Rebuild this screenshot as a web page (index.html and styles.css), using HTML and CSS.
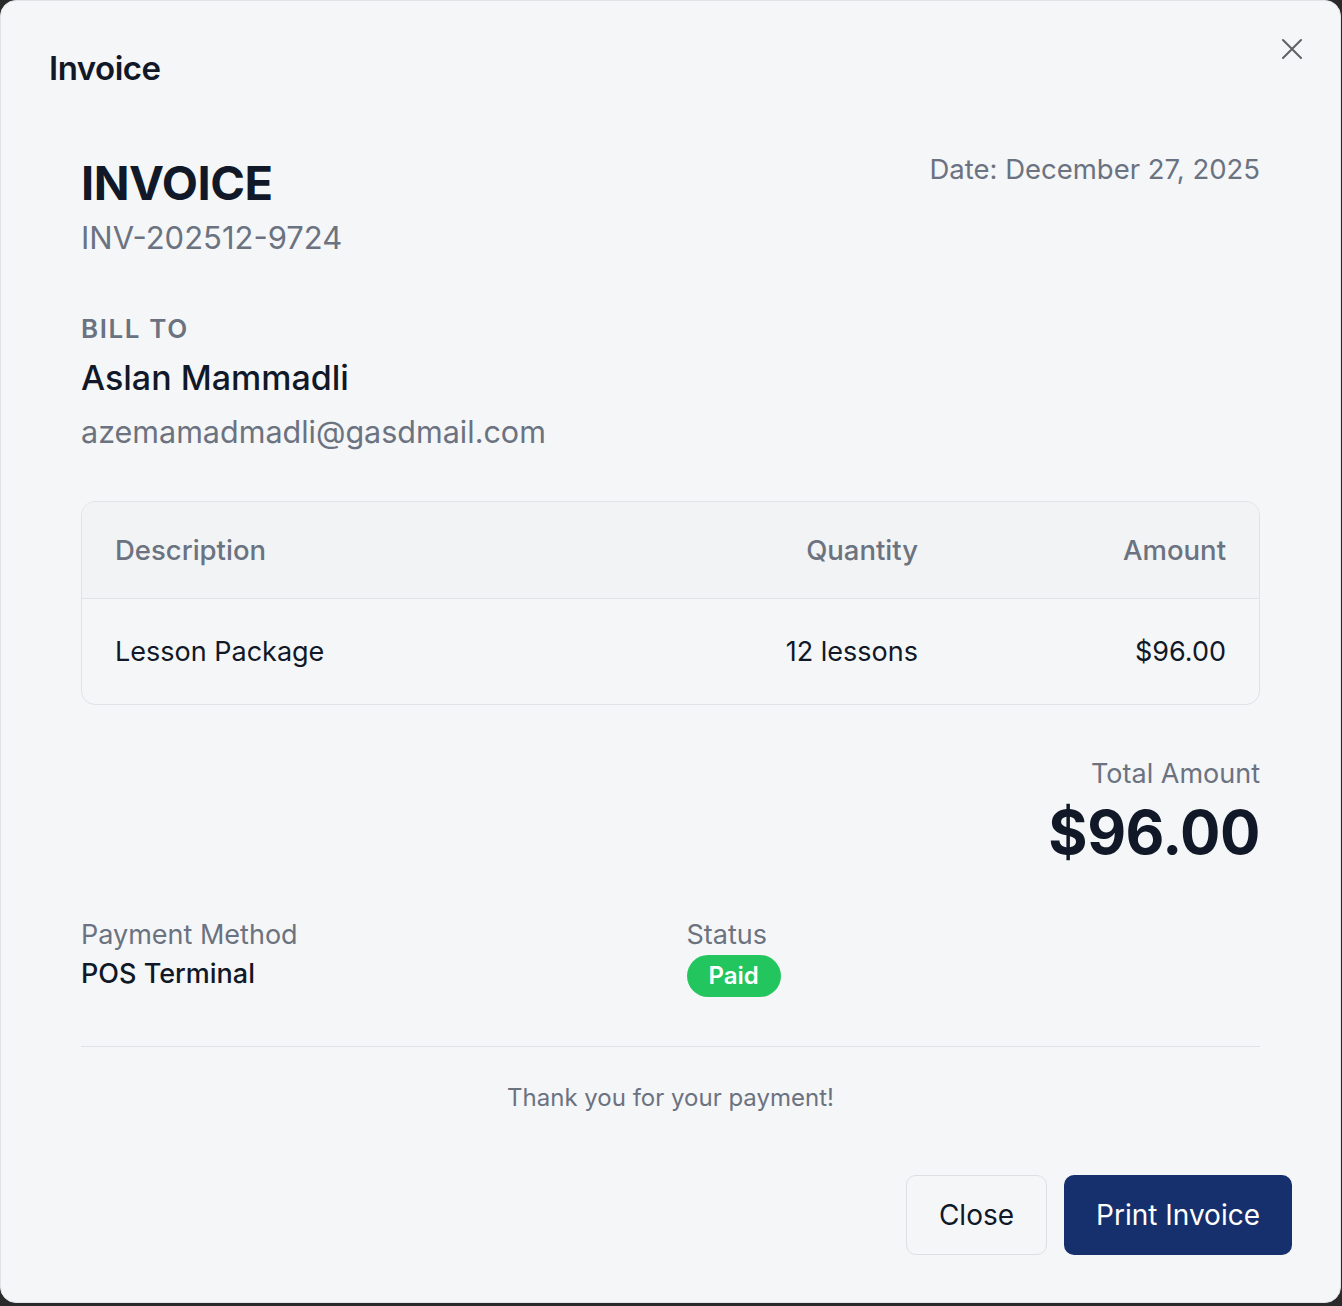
FILE: index.html
```html
<!DOCTYPE html>
<html lang="en">
<head>
  <meta charset="UTF-8" />
  <title>Invoice</title>
  <meta name="viewport" content="width=device-width, initial-scale=1.0" />
  <link rel="stylesheet" href="styles.css">
</head>
<body>

  <!-- modal -->
  <div class="modal">
    <div class="modal-header">
      <h2 class="modal-title">Invoice</h2>
      <button class="icon-close" aria-label="Close">
        <svg width="36" height="36" viewBox="0 0 24 24" fill="none" stroke="currentColor" stroke-width="1.4" stroke-linecap="round">
          <path d="M18 6L6 18M6 6l12 12" />
        </svg>
      </button>
    </div>

    <div class="invoice">
      <div class="invoice-top">
        <div>
          <div class="invoice-heading">INVOICE</div>
          <div class="invoice-number">INV-202512-9724</div>
        </div>
        <div class="invoice-date">Date: December 27, 2025</div>
      </div>

      <div class="bill-to">
        <div class="bill-label">BILL TO</div>
        <div class="bill-name">Aslan Mammadli</div>
        <div class="bill-email">azemamadmadli@gasdmail.com</div>
      </div>

      <div class="items">
        <div class="items-row items-head">
          <div>Description</div>
          <div class="num">Quantity</div>
          <div class="num">Amount</div>
        </div>
        <div class="items-row">
          <div>Lesson Package</div>
          <div class="num">12 lessons</div>
          <div class="num">$96.00</div>
        </div>
      </div>

      <div class="total">
        <div class="total-label">Total Amount</div>
        <div class="total-value">$96.00</div>
      </div>

      <div class="meta">
        <div>
          <div class="meta-label">Payment Method</div>
          <div class="meta-value">POS Terminal</div>
        </div>
        <div>
          <div class="meta-label">Status</div>
          <span class="badge">Paid</span>
        </div>
      </div>

      <div class="thanks">Thank you for your payment!</div>
    </div>

    <div class="modal-footer">
      <button class="btn btn-outline">Close</button>
      <button class="btn btn-primary">Print Invoice</button>
    </div>
  </div>

</body>
</html>
```

FILE: styles.css
```css
html, body {
  margin: 0;
  padding: 0;
}

body {
  font-family: Inter, "Noto Sans", sans-serif;
  background-color: #2a2a2a;
  color: #111827;
  height: 1306px;
  overflow: hidden;
}

.modal {
  box-sizing: border-box;
  width: 1341px;
  height: 1303px;
  background-color: #f5f6f8;
  border: 1px solid #e1e3e7;
  border-radius: 16px;
  padding: 0 48px;
  display: flex;
  flex-direction: column;
}

.modal-header {
  display: flex;
  justify-content: space-between;
  align-items: flex-start;
  padding-top: 46px;
}

.modal-title {
  margin: 0;
  font-size: 33px;
  font-weight: 600;
  letter-spacing: -0.5px;
  line-height: 42px;
}

.icon-close {
  background: none;
  border: 0;
  padding: 0;
  margin: -16px -18px 0 0;
  color: #5f6368;
  cursor: pointer;
  line-height: 0;
}

.invoice {
  padding: 65px 32px 0;
}

.invoice-top {
  display: flex;
  justify-content: space-between;
  align-items: flex-start;
}

.invoice-heading {
  font-size: 47px;
  font-weight: 700;
  line-height: 58px;
  letter-spacing: -0.5px;
}

.invoice-number {
  font-size: 31px;
  color: #6b7280;
  line-height: 40px;
  margin-top: 6px;
}

.invoice-date {
  font-size: 27.5px;
  color: #6b7280;
  line-height: 36px;
  margin-top: -3px;
}

.bill-to {
  margin-top: 54px;
}

.bill-label {
  font-size: 26px;
  font-weight: 600;
  color: #6b7280;
  letter-spacing: 1.6px;
  line-height: 34px;
}

.bill-name {
  font-size: 34px;
  font-weight: 500;
  line-height: 46px;
  margin-top: 9px;
}

.bill-email {
  font-size: 30.5px;
  color: #6b7280;
  line-height: 46px;
  margin-top: 8px;
}

.items {
  margin-top: 46px;
  border: 1.5px solid #dfe2e6;
  border-radius: 14px;
  overflow: hidden;
}

.items-row {
  display: grid;
  grid-template-columns: 1fr 300px 308px;
  align-items: center;
  padding: 0 33px;
  height: 105px;
  font-size: 27px;
}

.items-head {
  height: 96px;
  background-color: #f2f3f5;
  border-bottom: 1.5px solid #dfe2e6;
  color: #6b7280;
  font-size: 27.5px;
  font-weight: 500;
}

.num {
  text-align: right;
}

.total {
  margin-top: 51px;
  text-align: right;
}

.total-label {
  font-size: 27px;
  color: #6b7280;
  line-height: 36px;
}

.total-value {
  font-size: 60px;
  font-weight: 700;
  line-height: 80px;
  letter-spacing: -0.5px;
}

.meta {
  display: grid;
  grid-template-columns: 1fr 1fr;
  gap: 32px;
  margin-top: 44px;
  padding-bottom: 49px;
  border-bottom: 1.5px solid #dfe2e6;
}

.meta-label {
  font-size: 27px;
  color: #6b7280;
  line-height: 38px;
}

.meta-value {
  font-size: 27px;
  font-weight: 500;
  line-height: 40px;
}

.badge {
  display: inline-block;
  margin-top: 1px;
  background-color: #22c55e;
  color: white;
  font-size: 24px;
  font-weight: 600;
  padding: 4px 22px;
  border-radius: 999px;
  line-height: 34px;
}

.thanks {
  text-align: center;
  font-size: 24px;
  color: #6b7280;
  margin-top: 36px;
}

.modal-footer {
  margin-top: auto;
  display: flex;
  justify-content: flex-end;
  gap: 17px;
  padding-bottom: 47px;
}

.btn {
  font-family: inherit;
  font-size: 28px;
  height: 80px;
  padding: 0 32px;
  border-radius: 10px;
  cursor: pointer;
}

.btn-outline {
  background-color: #f5f6f8;
  border: 1.5px solid #dcdfe3;
  color: #111827;
}

.btn-primary {
  background-color: #15306c;
  border: 0;
  color: white;
  padding: 0 32px;
}
```
